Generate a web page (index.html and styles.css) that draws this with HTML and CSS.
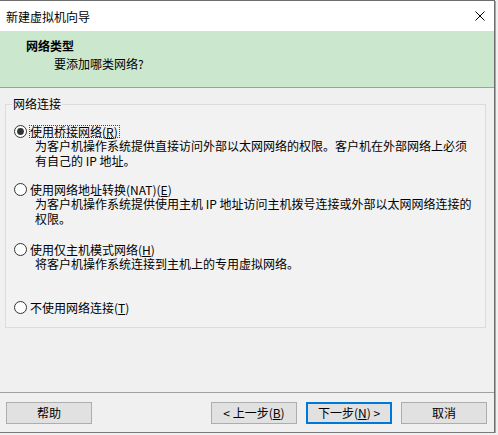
FILE: index.html
```html
<!DOCTYPE html>
<html lang="zh-CN">
<head>
<meta charset="utf-8">
<title>新建虚拟机向导</title>
<link rel="stylesheet" href="styles.css">
</head>
<body>
<div class="window">
  <div class="titlebar">
    <span class="title">新建虚拟机向导</span>
    <svg class="close" width="10" height="10" viewBox="0 0 10 10"><path d="M0.5 0.5 L9.5 9.5 M9.5 0.5 L0.5 9.5" stroke="#000" stroke-width="1" fill="none"/></svg>
  </div>
  <div class="header">
    <div class="h-title">网络类型</div>
    <div class="h-sub">要添加哪类网络?</div>
  </div>
  <div class="content">
    <fieldset class="group">
      <legend>网络连接</legend>
      <div class="opt opt1">
        <div class="row">
          <svg class="radio" width="13" height="13" viewBox="0 0 13 13"><circle cx="6.5" cy="6.5" r="6" fill="#fff" stroke="#333" stroke-width="1"/><circle cx="6.5" cy="6.5" r="3.4" fill="#333"/></svg>
          <span class="lbl focus">使用桥接网络(<u>R</u>)</span>
        </div>
        <div class="desc">为客户机操作系统提供直接访问外部以太网网络的权限。客户机在外部网络上必须<br>有自己的 IP 地址。</div>
      </div>
      <div class="opt opt2">
        <div class="row">
          <svg class="radio" width="13" height="13" viewBox="0 0 13 13"><circle cx="6.5" cy="6.5" r="6" fill="#fff" stroke="#333" stroke-width="1"/></svg>
          <span class="lbl">使用网络地址转换(NAT)(<u>E</u>)</span>
        </div>
        <div class="desc">为客户机操作系统提供使用主机 IP 地址访问主机拨号连接或外部以太网网络连接的<br>权限。</div>
      </div>
      <div class="opt opt3">
        <div class="row">
          <svg class="radio" width="13" height="13" viewBox="0 0 13 13"><circle cx="6.5" cy="6.5" r="6" fill="#fff" stroke="#333" stroke-width="1"/></svg>
          <span class="lbl">使用仅主机模式网络(<u>H</u>)</span>
        </div>
        <div class="desc">将客户机操作系统连接到主机上的专用虚拟网络。</div>
      </div>
      <div class="opt opt4">
        <div class="row">
          <svg class="radio" width="13" height="13" viewBox="0 0 13 13"><circle cx="6.5" cy="6.5" r="6" fill="#fff" stroke="#333" stroke-width="1"/></svg>
          <span class="lbl">不使用网络连接(<u>T</u>)</span>
        </div>
      </div>
    </fieldset>
  </div>
  <div class="footer">
    <button class="btn">帮助</button>
    <div class="spacer"></div>
    <button class="btn">&lt; 上一步(<u>B</u>)</button>
    <button class="btn default">下一步(<u>N</u>) &gt;</button>
    <button class="btn">取消</button>
  </div>
</div>
</body>
</html>
```

FILE: styles.css
```css
html, body {
  margin: 0;
  padding: 0;
  background: #f0f0f0;
}
body {
  font-family: "Noto Sans CJK SC", "Noto Sans", sans-serif;
  font-size: 12px;
  color: #000;
}
.window {
  width: 494px;
  height: 431px;
  border-top: 1px solid #6e6e6e;
  border-right: 1px solid #6e6e6e;
  border-bottom: 1px solid #7a7a7a;
  box-shadow: 1px 1px 0 #a8a8a8;
  display: flex;
  flex-direction: column;
  background: #f0f0f0;
}
.titlebar {
  height: 30px;
  background: #fff;
  display: flex;
  align-items: center;
  padding: 0 9px 0 6px;
  flex: none;
}
.title {
  flex: 1;
  line-height: 16px;
  padding-top: 1px;
}
.close {
  display: block;
}
.header {
  height: 56px;
  background: #cbe8cf;
  border-bottom: 1px solid #a0a0a0;
  padding-top: 7px;
  box-sizing: content-box;
  flex: none;
}
.header {
  height: 49px;
}
.h-title {
  font-weight: bold;
  margin-left: 26px;
  line-height: 16px;
}
.h-sub {
  margin-left: 54px;
  line-height: 16px;
  margin-top: 2px;
}
.content {
  height: 304px;
  flex: none;
  padding-top: 8px;
  box-sizing: border-box;
}
.group {
  margin: 0 0 0 5px;
  width: 481px;
  height: 232px;
  box-sizing: border-box;
  border: 1px solid #dcdcdc;
  padding: 13px 0 0 8px;
  background: #f2f2f2;
}
.group legend {
  line-height: 16px;
  padding: 0 1px;
  margin-left: -2px;
}
.opt2 { margin-top: 15px; }
.opt3 { margin-top: 17px; }
.opt4 { margin-top: 30px; }
.row {
  height: 13px;
  display: flex;
  align-items: center;
}
.radio {
  display: block;
  flex: none;
  margin-right: 2px;
}
.lbl {
  display: inline-block;
  line-height: 11px;
  border: 1px solid transparent;
  padding: 0 1px 0 0;
  white-space: nowrap;
}
.lbl.focus {
  border: 1px dotted #444;
}
u {
  text-decoration: underline;
  text-underline-offset: 1px;
}
.desc {
  margin-left: 21px;
  line-height: 15px;
  white-space: nowrap;
}
.footer {
  flex: 1;
  border-top: 1px solid #a0a0a0;
  display: flex;
  align-items: flex-start;
  padding: 9px 7px 0 6px;
}
.spacer {
  flex: 1;
}
.btn {
  width: 86px;
  height: 22px;
  box-sizing: border-box;
  border: 1px solid #adadad;
  background: #e1e1e1;
  font: inherit;
  color: #000;
  padding: 0;
  line-height: 18px;
  margin: 0;
}
.btn.default {
  border: 2px solid #0078d7;
  margin-left: 9px;
}
.btn:last-child {
  margin-left: 9px;
}
```
